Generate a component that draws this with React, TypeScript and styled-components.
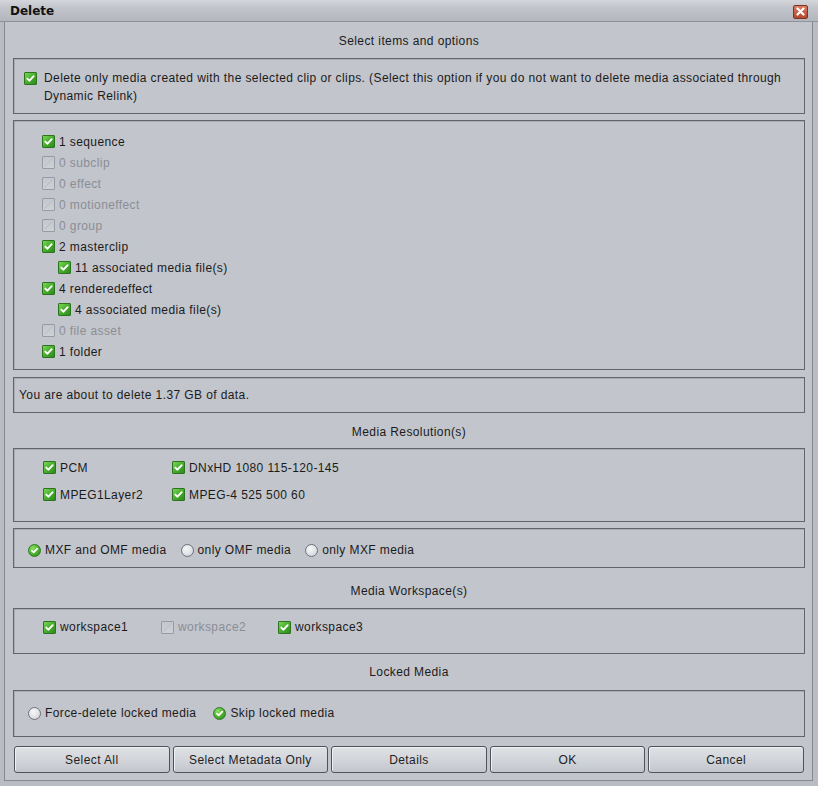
import styled, { createGlobalStyle } from "styled-components"

const GlobalStyle = createGlobalStyle`
    html, body {
        margin: 0;
        padding: 0;
    }
    body {
        font-family: "Liberation Sans", Arial, sans-serif;
        font-size: 12px;
        letter-spacing: 0.4px;
        color: #1b1b1b;
        background: #c2c5cc;
    }
`

type Item = { label: string; checked: boolean; sub?: boolean }

const items: Item[] = [
    { label: "1 sequence", checked: true },
    { label: "0 subclip", checked: false },
    { label: "0 effect", checked: false },
    { label: "0 motioneffect", checked: false },
    { label: "0 group", checked: false },
    { label: "2 masterclip", checked: true },
    { label: "11 associated media file(s)", checked: true, sub: true },
    { label: "4 renderedeffect", checked: true },
    { label: "4 associated media file(s)", checked: true, sub: true },
    { label: "0 file asset", checked: false },
    { label: "1 folder", checked: true },
]

const resolutions = ["PCM", "DNxHD 1080 115-120-145", "MPEG1Layer2", "MPEG-4 525 500 60"]

const workspaces = [
    { label: "workspace1", checked: true },
    { label: "workspace2", checked: false },
    { label: "workspace3", checked: true },
]

const buttons = ["Select All", "Select Metadata Only", "Details", "OK", "Cancel"]

function Check({ on }: { on: boolean }) {
    return (
        <CheckBox $on={on}>
            {on ? (
                <svg width="11" height="11" viewBox="0 0 11 11">
                    <path d="M2.3 5.6 L4.5 7.7 L8.7 3.2" fill="none" stroke="#fff" strokeWidth="1.9" strokeLinecap="round" strokeLinejoin="round" />
                </svg>
            ) : (
                <svg width="11" height="11" viewBox="0 0 11 11">
                    <path d="M1.5 9.5 L9.5 1.5" stroke="#b3b6bc" strokeWidth="0.8" />
                </svg>
            )}
        </CheckBox>
    )
}

function Radio({ on }: { on: boolean }) {
    return (
        <RadioDot $on={on}>
            {on && (
                <svg width="11" height="11" viewBox="0 0 11 11">
                    <path d="M2.8 5.7 L4.7 7.4 L8.3 3.6" fill="none" stroke="#fff" strokeWidth="1.7" strokeLinecap="round" strokeLinejoin="round" />
                </svg>
            )}
        </RadioDot>
    )
}

export default function App() {
    return (
        <>
            <GlobalStyle />
            <Window>
                <TitleBar>
                    <Title>Delete</Title>
                    <CloseBtn>
                        <svg width="9" height="9" viewBox="0 0 9 9">
                            <path d="M1.5 1.5 L7.5 7.5 M7.5 1.5 L1.5 7.5" stroke="#fff" strokeWidth="2.2" strokeLinecap="round" />
                        </svg>
                    </CloseBtn>
                </TitleBar>

                <Frame>
                    <Body>
                        <Heading $h={36} $pt={11}>Select items and options</Heading>

                        <Panel $h={56}>
                            <OptionRow>
                                <CheckSlot>
                                    <Check on={true} />
                                </CheckSlot>
                                <OptionText>
                                    Delete only media created with the selected clip or clips. (Select this option if you do not want to delete media associated through
                                    <br />
                                    Dynamic Relink)
                                </OptionText>
                            </OptionRow>
                        </Panel>

                        <Panel $h={250} $mt={6}>
                            <ItemList>
                                {items.map((v) => (
                                    <ItemRow key={v.label} $sub={v.sub}>
                                        <Check on={v.checked} />
                                        <Label $dim={!v.checked}>{v.label}</Label>
                                    </ItemRow>
                                ))}
                            </ItemList>
                        </Panel>

                        <Panel $h={36} $mt={7}>
                            <InfoText>You are about to delete 1.37 GB of data.</InfoText>
                        </Panel>

                        <Heading $h={35} $pt={11}>Media Resolution(s)</Heading>

                        <Panel $h={74}>
                            <ResGrid>
                                {resolutions.map((r) => (
                                    <Cell key={r}>
                                        <Check on={true} />
                                        <Label>{r}</Label>
                                    </Cell>
                                ))}
                            </ResGrid>
                        </Panel>

                        <Panel $h={40} $mt={6}>
                            <RadioRow $pt={13} $gap={14}>
                                <Cell>
                                    <Radio on={true} />
                                    <Label>MXF and OMF media</Label>
                                </Cell>
                                <Cell>
                                    <Radio on={false} />
                                    <Label>only OMF media</Label>
                                </Cell>
                                <Cell>
                                    <Radio on={false} />
                                    <Label>only MXF media</Label>
                                </Cell>
                            </RadioRow>
                        </Panel>

                        <Heading $h={40} $pt={15}>Media Workspace(s)</Heading>

                        <Panel $h={46}>
                            <WorkspaceRow>
                                {workspaces.map((w) => (
                                    <Cell key={w.label}>
                                        <Check on={w.checked} />
                                        <Label $dim={!w.checked}>{w.label}</Label>
                                    </Cell>
                                ))}
                            </WorkspaceRow>
                        </Panel>

                        <Heading $h={36} $pt={10}>Locked Media</Heading>

                        <Panel $h={47}>
                            <RadioRow $pt={14} $gap={17}>
                                <Cell>
                                    <Radio on={false} />
                                    <Label>Force-delete locked media</Label>
                                </Cell>
                                <Cell>
                                    <Radio on={true} />
                                    <Label>Skip locked media</Label>
                                </Cell>
                            </RadioRow>
                        </Panel>

                        <ButtonRow>
                            {buttons.map((b) => (
                                <Button key={b}>{b}</Button>
                            ))}
                        </ButtonRow>
                    </Body>
                </Frame>
            </Window>
        </>
    )
}

const Window = styled.div`
    width: 818px;
    height: 786px;
    display: flex;
    flex-direction: column;
    background: #bbbec5;
    overflow: hidden;
`

const TitleBar = styled.div`
    height: 22px;
    box-sizing: border-box;
    display: flex;
    align-items: center;
    padding: 0 6px 0 10px;
    background: linear-gradient(#d4d6db 0%, #c2c5cb 35%, #b3b6bd 100%);
    border-bottom: 1px solid #8f929a;
`

const Title = styled.div`
    font-family: "DejaVu Sans", "Liberation Sans", sans-serif;
    font-weight: bold;
    font-size: 12px;
    letter-spacing: 0;
    color: #111;
    margin-top: 1px;
`

const CloseBtn = styled.div`
    margin-left: auto;
    margin-right: 4px;
    margin-top: 2px;
    width: 15px;
    height: 14px;
    box-sizing: border-box;
    border: 1px solid #7d3425;
    border-radius: 2px;
    background: linear-gradient(#dc7a60, #b2482f);
    display: flex;
    justify-content: center;
    align-items: center;
`

const Frame = styled.div`
    flex: 1;
    display: flex;
    padding: 0 5px 5px 4px;
    background: #b9bcc3;
`

const Body = styled.div`
    flex: 1;
    display: flex;
    flex-direction: column;
    padding: 0 7px 0 8px;
    background: #c2c5cc;
    border: 1px solid #868991;
    border-top: none;
`

const Heading = styled.div<{ $h: number; $pt: number }>`
    height: ${(p) => p.$h}px;
    box-sizing: border-box;
    padding-top: ${(p) => p.$pt}px;
    line-height: 16px;
    text-align: center;
    color: #1b1b1b;
`

const Panel = styled.div<{ $h: number; $mt?: number }>`
    height: ${(p) => p.$h}px;
    margin-top: ${(p) => p.$mt ?? 0}px;
    box-sizing: border-box;
    border: 1px solid #62656c;
    box-shadow: inset 1px 1px 0 #a9acb3;
    flex-shrink: 0;
`

const OptionRow = styled.div`
    display: flex;
    align-items: flex-start;
    padding: 10px 8px 0 10px;
`

const CheckSlot = styled.div`
    padding-top: 3px;
    margin-right: 7px;
`

const OptionText = styled.div`
    line-height: 18px;
    white-space: nowrap;
`

const CheckBox = styled.span<{ $on: boolean }>`
    width: 13px;
    height: 13px;
    box-sizing: border-box;
    flex-shrink: 0;
    display: inline-flex;
    justify-content: center;
    align-items: center;
    border-radius: 1px;
    border: 1px solid ${(p) => (p.$on ? "#2c7420" : "#989ba2")};
    background: ${(p) =>
        p.$on
            ? "linear-gradient(135deg, #79d655 0%, #45a92c 55%, #2e8a1e 100%)"
            : "linear-gradient(#c4c7cd, #cdd0d5)"};
`

const RadioDot = styled.span<{ $on: boolean }>`
    width: 13px;
    height: 13px;
    box-sizing: border-box;
    flex-shrink: 0;
    border-radius: 50%;
    display: inline-flex;
    justify-content: center;
    align-items: center;
    border: 1px solid ${(p) => (p.$on ? "#2d7a21" : "#6f727a")};
    background: ${(p) =>
        p.$on
            ? "radial-gradient(circle at 35% 30%, #8ae063 0%, #4cae30 55%, #2c861c 100%)"
            : "radial-gradient(circle at 40% 35%, #f6f7f8 0%, #e2e4e7 50%, #c6c9ce 100%)"};
`

const ItemList = styled.div`
    display: flex;
    flex-direction: column;
    padding: 10px 0 0 28px;
`

const ItemRow = styled.div<{ $sub?: boolean }>`
    height: 21px;
    display: flex;
    align-items: center;
    gap: 4px;
    margin-left: ${(p) => (p.$sub ? 16 : 0)}px;
`

const Label = styled.span<{ $dim?: boolean }>`
    color: ${(p) => (p.$dim ? "#8b8e95" : "#1b1b1b")};
    white-space: nowrap;
`

const InfoText = styled.div`
    height: 34px;
    display: flex;
    align-items: center;
    padding-left: 5px;
`

const ResGrid = styled.div`
    display: grid;
    grid-template-columns: 129px auto;
    grid-auto-rows: 27px;
    padding: 5px 0 0 29px;
`

const Cell = styled.div`
    display: flex;
    align-items: center;
    gap: 4px;
`

const RadioRow = styled.div<{ $pt: number; $gap: number }>`
    display: flex;
    align-items: center;
    gap: ${(p) => p.$gap}px;
    height: 16px;
    padding: ${(p) => p.$pt}px 0 0 14px;
`

const WorkspaceRow = styled.div`
    display: grid;
    grid-template-columns: 118px 117px auto;
    height: 16px;
    align-items: center;
    padding: 10px 0 0 29px;
`

const ButtonRow = styled.div`
    display: flex;
    gap: 3px;
    margin-top: 9px;
    padding: 0 1px;
`

const Button = styled.div`
    flex: 1;
    height: 27px;
    box-sizing: border-box;
    display: flex;
    justify-content: center;
    align-items: center;
    border: 1px solid #4f525a;
    border-radius: 3px;
    background: linear-gradient(#dfe1e5 0%, #d2d5da 50%, #c3c6cc 100%);
    box-shadow: inset 1px 1px 0 #eef0f2;
    color: #222;
`
